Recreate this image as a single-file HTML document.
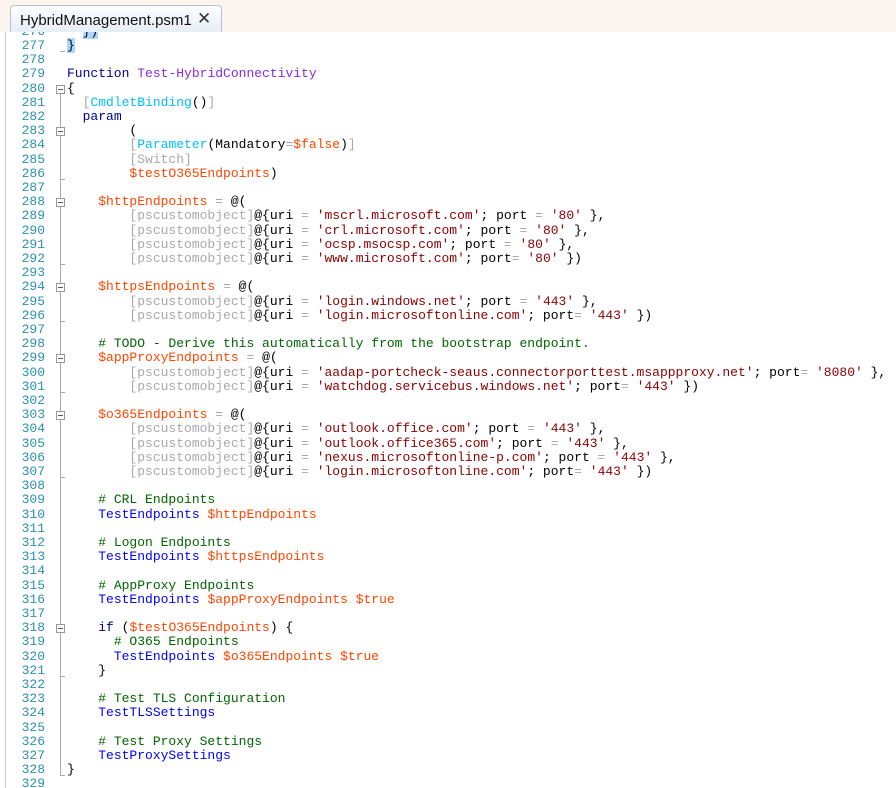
<!DOCTYPE html>
<html><head><meta charset="utf-8"><style>
body{margin:0;width:896px;height:788px;overflow:hidden;background:#fff;position:relative;font-family:"Liberation Mono",monospace;font-size:13px}
#top{position:absolute;left:0;top:0;width:896px;height:32px;background:#fbf4ef}
#tab{position:absolute;left:10px;top:5px;width:210px;height:28px;border:1px solid #b9c3cf;border-bottom:none;border-radius:4px 4px 0 0;background:linear-gradient(#fdfeff,#e4ecf6);font-family:"Liberation Sans",sans-serif;font-size:15px;color:#111}
#tab span{position:absolute;left:9px;top:6px}
#tab b{position:absolute;left:186px;top:3px;font-weight:normal;font-size:17px;color:#333}
#ed{position:absolute;left:5px;top:32px;width:891px;height:756px;overflow:hidden;border-left:1px solid #c9c9c9;background:#fff}
.l{position:absolute;left:0;height:14.2px;line-height:14.2px;white-space:pre;width:900px}
.n{position:absolute;right:861px;color:#2b91af;text-align:right}
.c{position:absolute;left:61px;color:#000}
.k{color:#00008b}.v{color:#ff4500}.s{color:#8b0000}.g{color:#a9a9a9}.b{color:#00bfff}.m{color:#0000ff}.f{color:#8a2be2}.cm{color:#006400}
.fold{position:absolute;left:50px;width:7px;height:7px;border:1px solid #999;background:#fff}
.fold:after{content:"";position:absolute;left:1px;top:3px;width:5px;height:1px;background:#555}
#vl{position:absolute;left:54px;width:1px;background:#aaa}
.tick{position:absolute;left:54px;width:5px;height:1px;background:#aaa}
.sel{background:#add6ff}
</style></head><body>
<div id="top"></div>
<div id="tab"><span>HybridManagement.psm1</span><b>✕</b></div>
<div id="ed">
<div id="vl" style="top:62px;height:682px"></div>
<div id="lines"></div>
</div>
<script>
var L=[
'  <span class="sel">})</span>',
'<span class="sel">}</span>',
'',
'<span class="k">Function</span> <span class="f">Test-HybridConnectivity</span>',
'{',
'  <span class="g">[</span><span class="b">CmdletBinding</span>()<span class="g">]</span>',
'  <span class="k">param</span>',
'        (',
'        <span class="g">[</span><span class="b">Parameter</span>(Mandatory<span class="g">=</span><span class="v">$false</span>)<span class="g">]</span>',
'        <span class="g">[Switch]</span>',
'        <span class="v">$testO365Endpoints</span>)',
'',
'    <span class="v">$httpEndpoints</span> <span class="g">=</span> @(',
'        <span class="g">[pscustomobject]</span>@{uri <span class="g">=</span> <span class="s">\'mscrl.microsoft.com\'</span>; port <span class="g">=</span> <span class="s">\'80\'</span> },',
'        <span class="g">[pscustomobject]</span>@{uri <span class="g">=</span> <span class="s">\'crl.microsoft.com\'</span>; port <span class="g">=</span> <span class="s">\'80\'</span> },',
'        <span class="g">[pscustomobject]</span>@{uri <span class="g">=</span> <span class="s">\'ocsp.msocsp.com\'</span>; port <span class="g">=</span> <span class="s">\'80\'</span> },',
'        <span class="g">[pscustomobject]</span>@{uri <span class="g">=</span> <span class="s">\'www.microsoft.com\'</span>; port<span class="g">=</span> <span class="s">\'80\'</span> })',
'',
'    <span class="v">$httpsEndpoints</span> <span class="g">=</span> @(',
'        <span class="g">[pscustomobject]</span>@{uri <span class="g">=</span> <span class="s">\'login.windows.net\'</span>; port <span class="g">=</span> <span class="s">\'443\'</span> },',
'        <span class="g">[pscustomobject]</span>@{uri <span class="g">=</span> <span class="s">\'login.microsoftonline.com\'</span>; port<span class="g">=</span> <span class="s">\'443\'</span> })',
'',
'    <span class="cm"># TODO - Derive this automatically from the bootstrap endpoint.</span>',
'    <span class="v">$appProxyEndpoints</span> <span class="g">=</span> @(',
'        <span class="g">[pscustomobject]</span>@{uri <span class="g">=</span> <span class="s">\'aadap-portcheck-seaus.connectorporttest.msappproxy.net\'</span>; port<span class="g">=</span> <span class="s">\'8080\'</span> },',
'        <span class="g">[pscustomobject]</span>@{uri <span class="g">=</span> <span class="s">\'watchdog.servicebus.windows.net\'</span>; port<span class="g">=</span> <span class="s">\'443\'</span> })',
'',
'    <span class="v">$o365Endpoints</span> <span class="g">=</span> @(',
'        <span class="g">[pscustomobject]</span>@{uri <span class="g">=</span> <span class="s">\'outlook.office.com\'</span>; port <span class="g">=</span> <span class="s">\'443\'</span> },',
'        <span class="g">[pscustomobject]</span>@{uri <span class="g">=</span> <span class="s">\'outlook.office365.com\'</span>; port <span class="g">=</span> <span class="s">\'443\'</span> },',
'        <span class="g">[pscustomobject]</span>@{uri <span class="g">=</span> <span class="s">\'nexus.microsoftonline-p.com\'</span>; port <span class="g">=</span> <span class="s">\'443\'</span> },',
'        <span class="g">[pscustomobject]</span>@{uri <span class="g">=</span> <span class="s">\'login.microsoftonline.com\'</span>; port<span class="g">=</span> <span class="s">\'443\'</span> })',
'',
'    <span class="cm"># CRL Endpoints</span>',
'    <span class="m">TestEndpoints</span> <span class="v">$httpEndpoints</span>',
'',
'    <span class="cm"># Logon Endpoints</span>',
'    <span class="m">TestEndpoints</span> <span class="v">$httpsEndpoints</span>',
'',
'    <span class="cm"># AppProxy Endpoints</span>',
'    <span class="m">TestEndpoints</span> <span class="v">$appProxyEndpoints</span> <span class="v">$true</span>',
'',
'    <span class="k">if</span> (<span class="v">$testO365Endpoints</span>) {',
'      <span class="cm"># O365 Endpoints</span>',
'      <span class="m">TestEndpoints</span> <span class="v">$o365Endpoints</span> <span class="v">$true</span>',
'    }',
'',
'    <span class="cm"># Test TLS Configuration</span>',
'    <span class="m">TestTLSSettings</span>',
'',
'    <span class="cm"># Test Proxy Settings</span>',
'    <span class="m">TestProxySettings</span>',
'}',
''];
var h='',folds=[280,283,288,294,299,303,318],ticks=[286,292,296,301,307,321,328,277];
for(var i=0;i<L.length;i++){var n=276+i,t=7+(n-277)*14.2;
h+='<div class="l" style="top:'+t+'px"><span class="n">'+n+'</span><span class="c">'+L[i]+'</span></div>';
if(folds.indexOf(n)>=0)h+='<div class="fold" style="top:'+(t+3)+'px"></div>';
if(ticks.indexOf(n)>=0)h+='<div class="tick" style="top:'+(t+12)+'px"></div>';}
document.getElementById('lines').innerHTML=h;
</script>
</body></html>
